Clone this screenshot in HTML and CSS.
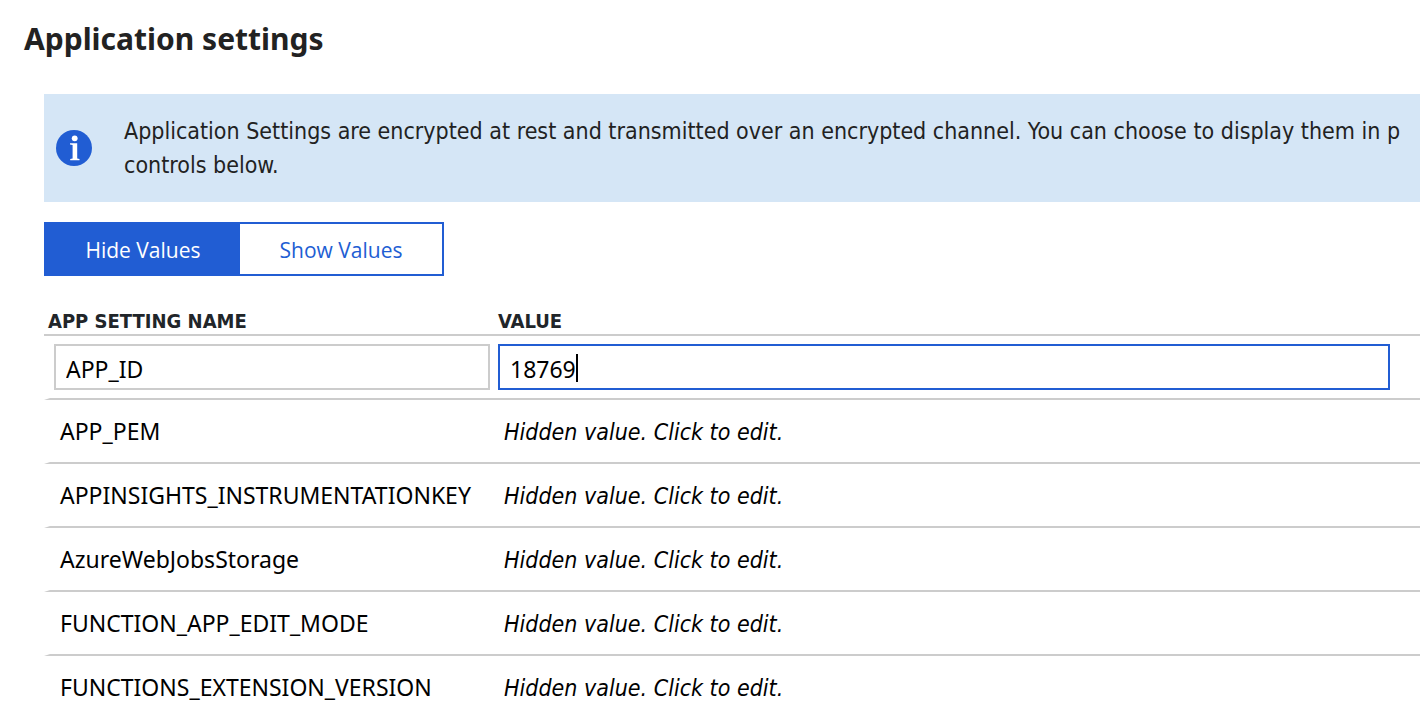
FILE: index.html
```html
<!DOCTYPE html>
<html lang="en">
<head>
<meta charset="utf-8">
<title>Application settings</title>
<link rel="stylesheet" href="styles.css">
</head>
<body>
<main class="page">
  <h1 class="title">Application settings</h1>
  <div class="content">
    <div class="banner">
      <svg class="banner-icon" viewBox="0 0 36 36" aria-hidden="true">
        <circle cx="18" cy="18" r="18" fill="#215dd3"/>
        <circle cx="18.7" cy="8.3" r="2.9" fill="#fff"/>
        <path d="M14 13.2h7.2v15.3l2.3.5v1.2h-9.3V29l2.4-.5V15l-2.6-.5z" fill="#fff"/>
      </svg>
      <p class="banner-text">Application Settings are encrypted at rest and transmitted over an encrypted channel. You can choose to display them in p<br>controls below.</p>
    </div>
    <div class="toggle">
      <button type="button" class="toggle-option toggle-option-active" aria-pressed="true">Hide Values</button>
      <button type="button" class="toggle-option" aria-pressed="false">Show Values</button>
    </div>
    <table class="settings">
      <thead>
        <tr><th class="name-column" id="name-heading">APP SETTING NAME</th><th id="value-heading">VALUE</th></tr>
      </thead>
      <tbody>
        <tr class="editing">
          <td><input class="field" type="text" value="APP_ID" aria-labelledby="name-heading"></td>
          <td><div class="field-wrap"><input class="field field-active" type="text" value="18769" aria-labelledby="value-heading"><span class="caret"></span></div></td>
        </tr>
        <tr><td>APP_PEM</td><td class="hidden-value">Hidden value. Click to edit.</td></tr>
        <tr><td>APPINSIGHTS_INSTRUMENTATIONKEY</td><td class="hidden-value">Hidden value. Click to edit.</td></tr>
        <tr><td>AzureWebJobsStorage</td><td class="hidden-value">Hidden value. Click to edit.</td></tr>
        <tr><td>FUNCTION_APP_EDIT_MODE</td><td class="hidden-value">Hidden value. Click to edit.</td></tr>
        <tr><td>FUNCTIONS_EXTENSION_VERSION</td><td class="hidden-value">Hidden value. Click to edit.</td></tr>
      </tbody>
    </table>
  </div>
</main>
</body>
</html>
```
FILE: styles.css
```css
* { box-sizing: border-box; }

body {
  margin: 0;
  background: #fff;
  color: #222;
  font-family: "Open Sans", sans-serif;
  font-size: 23px;
  overflow: hidden;
}

.title {
  margin: 0;
  padding: 19px 24px 35px;
  font-family: "Noto Sans", sans-serif;
  font-size: 30px;
  line-height: 40px;
}

.content { padding-left: 44px; }

.banner {
  display: flex;
  align-items: center;
  gap: 32px;
  padding: 20px 0 20px 12px;
  background: #d5e6f6;
  overflow: hidden;
}

.banner-icon {
  flex: none;
  width: 36px;
  height: 36px;
}

.banner-text {
  margin: 0;
  font-family: "DejaVu Sans Condensed", sans-serif;
  line-height: 34px;
  white-space: nowrap;
}

.toggle {
  display: inline-flex;
  width: 400px;
  margin-top: 20px;
  border: 2px solid #215dd3;
}

.toggle-option {
  flex: 1 1 202px;
  height: 50px;
  padding: 2px 0 0;
  border: 0;
  background: #fff;
  color: #215dd3;
  font: inherit;
  font-size: 21px;
}

.toggle-option-active {
  flex-basis: 194px;
  background: #215dd3;
  color: #fff;
}

.settings {
  width: 100%;
  margin-top: 28px;
  border-collapse: separate;
  border-spacing: 0;
  table-layout: fixed;
}

.settings th {
  height: 32px;
  padding: 4px 4px 0;
  border-bottom: 2px solid #ccc;
  color: #212529;
  font-family: "DejaVu Sans Condensed", sans-serif;
  font-size: 20px;
  line-height: 26px;
  text-align: left;
}

.name-column { width: 450px; }

.settings td {
  height: 64px;
  padding: 0 10px;
  border-bottom: 2px solid #ccc;
  color: #000;
  font-family: "Noto Sans", sans-serif;
  white-space: nowrap;
}

.settings td:first-child { border-left: 6px solid transparent; }

.settings .hidden-value {
  padding-top: 2px;
  font-family: "DejaVu Sans Condensed", sans-serif;
  font-style: italic;
}

.settings .editing td { padding: 0 4px; }
.settings .editing td:last-child { padding-right: 30px; }

.field-wrap { position: relative; }

.field {
  display: block;
  width: 100%;
  height: 46px;
  padding: 4px 10px 0;
  border: 2px solid #ccc;
  background: #fff;
  color: #000;
  font: inherit;
}

.field-active { border-color: #215dd3; }

.caret {
  position: absolute;
  top: 10px;
  left: 78px;
  width: 2px;
  height: 28px;
  background: #000;
}
```
